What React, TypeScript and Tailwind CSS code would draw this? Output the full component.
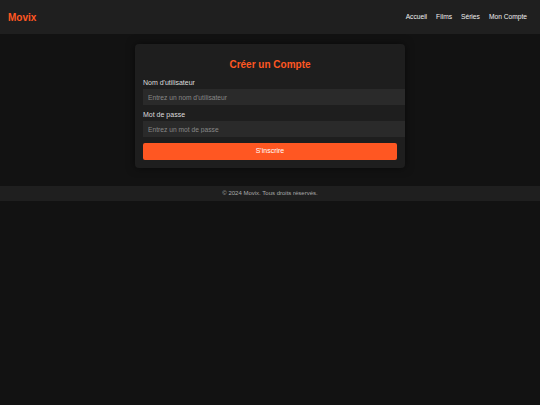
export default function App() {
  return (
    <div className="flex min-h-screen flex-col bg-[#121212] font-['Liberation_Sans',Arial,sans-serif] text-[#e0e0e0]">
      <header className="flex h-[34px] items-center justify-between bg-[#1f1f1f] pl-[8px] pr-[13px]">
        <div className="text-[10px] font-bold text-[#ff5722]">Movix</div>
        <nav className="flex gap-[9px] text-[6.67px] text-[#f0f0f0]">
          <a href="#">Accueil</a>
          <a href="#">Films</a>
          <a href="#">Séries</a>
          <a href="#">Mon Compte</a>
        </nav>
      </header>

      <main className="flex justify-center pt-[10px]">
        <div className="w-[270px] rounded-[4px] bg-[#1e1e1e] px-[8px] pb-[8px] pt-[15px] shadow-[0_0_8px_rgba(0,0,0,0.5)]">
          <h2 className="mb-[8px] text-center text-[10px] leading-[12px] font-bold text-[#ff5722]">Créer un Compte</h2>
          <form className="flex flex-col">
            <label className="mb-[2px] text-[7px] leading-[8px] text-[#dddddd]">Nom d'utilisateur</label>
            <input
              type="text"
              placeholder="Entrez un nom d'utilisateur"
              className="h-[16px] w-[262px] bg-[#2a2a2a] px-[5px] text-[6.7px] text-white outline-none placeholder:text-[#888888]"
            />
            <label className="mt-[6px] mb-[2px] text-[7px] leading-[8px] text-[#dddddd]">Mot de passe</label>
            <input
              type="password"
              placeholder="Entrez un mot de passe"
              className="h-[16px] w-[262px] bg-[#2a2a2a] px-[5px] text-[6.7px] text-white outline-none placeholder:text-[#888888]"
            />
            <button
              type="submit"
              className="mt-[6px] h-[17px] w-full rounded-[2px] bg-[#ff5722] text-[7px] font-normal text-white"
            >
              S'inscrire
            </button>
          </form>
        </div>
      </main>

      <footer className="mt-[18px] flex h-[15px] items-center justify-center bg-[#1f1f1f] text-[6px] text-[#aaaaaa]">
        © 2024 Movix. Tous droits réservés.
      </footer>
    </div>
  );
}
